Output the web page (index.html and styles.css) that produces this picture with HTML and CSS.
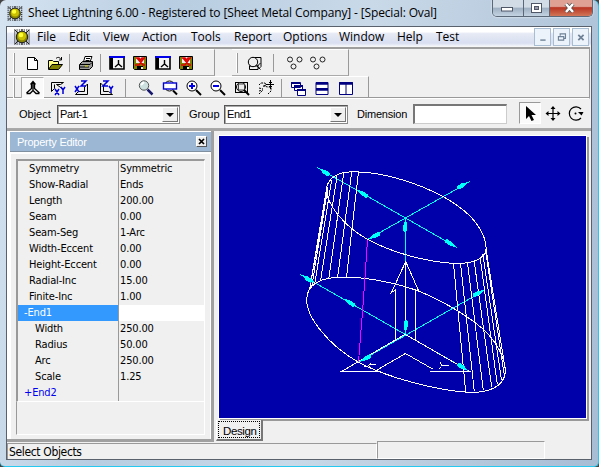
FILE: index.html
```
<!DOCTYPE html>
<html lang="en">
<head>
<meta charset="utf-8">
<title>Sheet Lightning 6.00</title>
<link rel="stylesheet" href="styles.css">
</head>
<body>
<svg class="defs" aria-hidden="true">
  <symbol id="logo" viewBox="0 0 16 16"><path d="M0 1h16M0 3h16M0 5h16M0 7h16M0 9h16M0 11h16M0 13h16M0 15h16" stroke="#222" stroke-dasharray="1.4 1"/><path d="M8 0v16M1 1l14 14M15 1L1 15" stroke="#222"/><circle cx="8" cy="8" r="5.7" fill="#8c8600" stroke="#222"/><circle cx="8" cy="7" r="4.2" fill="#c8c000"/><circle cx="7" cy="6" r="2.3" fill="#ffff38"/></symbol>
  <symbol id="disk" viewBox="0 0 16 16"><path d="M1.5 1.5h13v13h-12l-1-1z" fill="#808000" stroke="#000"/><path d="M4 2h8v6H4z" fill="#eee"/><path d="M5 11h6v3H5z" fill="#000"/><path d="M9 12h2v2H9z" fill="#eee"/><path d="M4 3h3l1.5 2L10 3h3M5 10h2l5-7M5 3l6 7h2M3 10h3" fill="none" stroke="#e00000" stroke-width="1.6"/></symbol>
  <symbol id="form" viewBox="0 0 16 16"><path d="M1 2h14v12H1z" fill="#f4f4f4" stroke="#000" stroke-width="1.6"/><path d="M0 1h16v2H0z" fill="#0000e8"/><path d="M1 3h3v11H1z" fill="#000"/><path d="M9.5 5v4L6 12M9.5 9l3.5 3" fill="none" stroke="#000" stroke-width="1.4"/></symbol>
  <symbol id="rings" viewBox="0 0 16 16"><g fill="none" stroke="#222"><circle cx="3" cy="4.5" r="2.5"/><circle cx="12.5" cy="4.5" r="2.5"/><circle cx="6.5" cy="11.5" r="2.5"/></g></symbol>
  <symbol id="boxlens" viewBox="0 0 16 16"><path d="M5 2.5h9v9l-3 3H2.500v-4M5 2.500l-2.500 3M11 14v-4M2.500 11h8l3-3" fill="none" stroke="#000"/><circle cx="6" cy="7" r="4.700" fill="#eee" stroke="#000"/><path d="M9.500 10.500l4 4" stroke="#000"/></symbol>
  <symbol id="arrow" overflow="visible"><path d="M0 0L-5-1.300L-8-2.300L-13-2.300L-14 0L-13 1.500L-8 2L-5 1.300Z" fill="#0ff"/></symbol>
</svg>
<div class="window">
  <header class="title">
    <svg class="logo"><use href="#logo"/></svg>
    <span class="caption">Sheet Lightning 6.00 - Registered to [Sheet Metal Company] - [Special: Oval]</span>
    <div class="controls">
      <span class="ctl"><svg viewBox="0 0 14 12"><rect x="1.500" y="5.500" width="11" height="3.500" fill="#fff" stroke="#505868"/></svg></span>
      <span class="ctl"><svg viewBox="0 0 14 12"><rect x="1.500" y="1.500" width="10" height="9" fill="#fff" stroke="#505868"/><rect x="4.500" y="4.500" width="4" height="3" fill="#99a" stroke="#505868"/></svg></span>
      <span class="ctl close"><svg viewBox="0 0 14 12"><path d="M3 2l7 8M10 2L3 10" stroke="#505050" stroke-width="4"/><path d="M3 2l7 8M10 2L3 10" stroke="#fff" stroke-width="2.500"/></svg></span>
    </div>
  </header>
  <div class="client">
    <nav class="menu">
      <svg class="logo"><use href="#logo"/></svg>
      <span class="m1">File</span><span class="m2">Edit</span><span class="m3">View</span><span class="m4">Action</span><span class="m5">Tools</span><span class="m6">Report</span><span class="m7">Options</span><span class="m8">Window</span><span class="m9">Help</span><span class="m10">Test</span>
      <div class="mdi">
        <svg viewBox="0 0 17 17"><path d="M6 12h6" stroke="#6f8297" stroke-width="1.600"/></svg>
        <svg viewBox="0 0 17 17"><path d="M7 7V5h6v5h-2M5 8h6v4H5z" fill="none" stroke="#6f8297" stroke-width="1.300"/></svg>
        <svg viewBox="0 0 17 17"><path d="M6 6l6 6M12 6l-6 6" stroke="#6f8297" stroke-width="2"/></svg>
      </div>
    </nav>
    <section class="dock">
      <div class="bars">
        <div class="bar file">
          <i class="grip"></i>
          <svg class="ico"><path d="M3.500 2.500h7l3 3v9h-10zM10.500 2.500v3h3" fill="#fff" stroke="#000"/></svg>
          <svg class="ico"><path d="M1.500 14V5.500h4l1 1h5V9" fill="#ffff80" stroke="#000"/><path d="M1.500 14.500L5 9.500h10.500l-4 5z" fill="#808000" stroke="#000"/><path d="M9 3.500c2-2 4-1 5 1M14.500 2v3H12" fill="none" stroke="#000"/></svg>
          <i class="sep"></i>
          <svg class="ico"><path d="M5.500 7L7 1.500h7L12 7" fill="#fff" stroke="#000"/><path d="M8 3.500h4M7.500 5.500h4" stroke="#000"/><path d="M1.500 9.500l3-3h10v5l-3 3h-10z" fill="#999" stroke="#000"/><path d="M2 9.500h10l2-2M2 12h9" fill="none" stroke="#000"/><path d="M7 11h3" stroke="#dd0"/></svg>
          <i class="sep"></i>
          <svg class="ico"><use href="#form"/></svg><svg class="ico"><use href="#disk"/></svg><svg class="ico"><use href="#form"/></svg><svg class="ico"><use href="#disk"/></svg>
        </div>
        <div class="bar objects">
          <i class="grip"></i>
          <svg class="ico"><use href="#boxlens"/></svg>
          <i class="sep"></i>
          <svg class="ico"><use href="#rings"/></svg><svg class="ico"><use href="#rings"/></svg>
        </div>
      </div>
      <div class="bars">
        <div class="bar view">
          <i class="grip"></i>
          <span class="pressed"><svg class="ico"><path d="M8 1v9M5.500 4.500L8 1.500l2.500 3M6.500 4v4.500L1.500 13M9.500 4v4.500l5 4.500M1.500 13.500H5l3-3 3 3h3.500" fill="none" stroke="#000" stroke-width="1.300"/></svg></span>
          <svg class="ico"><path d="M1.500 2.500h12l-3 2h-4l7 5M1.500 2.500v9l3-3V4.500" fill="none" stroke="#000"/><path d="M5 9l4 6M9 9l-4 6M11 7l2 3 2-3M13 10v4" fill="none" stroke="#0000d8" stroke-width="1.500"/></svg>
          <svg class="ico"><path d="M13.500 4v10.500h-12l3-3h6V7z" fill="none" stroke="#000"/><path d="M1 6l4 6M5 6l-4 6M7 1h5L7 6h5" fill="none" stroke="#0000d8" stroke-width="1.500"/></svg>
          <svg class="ico"><path d="M2.500 3v11.500h12l-4-3h-5V6z" fill="none" stroke="#000"/><path d="M5 1h5L5 6h5M11 6l2 3 2-3M13 9v4" fill="none" stroke="#0000d8" stroke-width="1.500"/></svg>
          <i class="sep wide"></i>
          <svg class="ico"><circle cx="6" cy="5.500" r="4.700" fill="#cce0e0" stroke="#555"/><path d="M3 5l3-3" stroke="#fff" stroke-width="2"/><path d="M9.500 9.500l5 5" stroke="#18186c" stroke-width="2.500"/></svg>
          <svg class="ico"><circle cx="7.500" cy="6" r="5" fill="#fff" stroke="#000"/><rect x="1.500" y="3" width="13" height="6" fill="#fff" stroke="#0000d8" stroke-width="1.400"/><path d="M11 10.500l4 4" stroke="#000" stroke-width="2"/></svg>
          <svg class="ico"><circle cx="6" cy="6" r="5" fill="#fff" stroke="#000"/><path d="M3 6h6M6 3v6" stroke="#0000e8" stroke-width="2"/><path d="M10 10l5 5" stroke="#000" stroke-width="2"/></svg>
          <svg class="ico"><circle cx="6" cy="6" r="5" fill="#fff" stroke="#000"/><path d="M3 6h6" stroke="#0000e8" stroke-width="2"/><path d="M10 10l5 5" stroke="#000" stroke-width="2"/></svg>
          <svg class="ico"><rect x="1.500" y="2.500" width="12" height="10" fill="none" stroke="#000"/><circle cx="7" cy="7" r="4.500" fill="#eee" stroke="#000"/><rect x="4.500" y="4" width="6" height="6" fill="none" stroke="#444"/><path d="M10 10l5 5" stroke="#000" stroke-width="2"/></svg>
          <svg class="ico"><path d="M1 5l2-2h4l1 2-3 1 5 1h3v4l-3 3M1 8l4 1M1 11l4-1M1 14l3-3" fill="none" stroke="#000" stroke-dasharray="2 1"/><path d="M12.500 0v9M8 4.500h8M11 2.500h3M11 6.500h3" stroke="#000"/></svg>
          <i class="sep"></i>
          <svg class="ico"><path d="M1.500 2.500h9v5h-9zM4.500 5.500h8v5h-8zM7.500 9.500h8v6h-8z" fill="#fff" stroke="#000080"/><path d="M1 3h9M4 6h9M7 10h9" stroke="#000080" stroke-width="2"/></svg>
          <svg class="ico"><path d="M2 2.500h12v12H2zM2 8.500h12" fill="#fff" stroke="#000080"/><path d="M2 3.500h12M2 9.500h12" stroke="#000080" stroke-width="2.500"/></svg>
          <svg class="ico"><path d="M1.500 2.500h13v12h-13zM8 2v12" fill="#fff" stroke="#000080"/><path d="M1 3.500h14" stroke="#000080" stroke-width="2.500"/></svg>
        </div>
      </div>
    </section>
    <section class="selector">
      <label class="l1">Object</label><div class="combo c1"><span>Part-1</span><b></b></div>
      <label class="l2">Group</label><div class="combo c2"><span>End1</span><b></b></div>
      <label class="l3">Dimension</label><div class="field"></div>
      <span class="tool on"><svg viewBox="0 0 22 22"><path d="M7 4v13l3-3 2.500 5 2.500-1-2.500-5H17z" fill="#000"/></svg></span>
      <span class="tool"><svg viewBox="0 0 22 22"><path d="M11 5v13M4.500 11.500h13" stroke="#000" stroke-width="1.200"/><path d="M11 4l2.500 3h-5zM11 19l2.500-3h-5zM3.500 11.500l3-2.500v5zM18.500 11.500l-3-2.500v5z"/></svg></span>
      <span class="tool last"><svg viewBox="0 0 22 22"><path d="M16 16A6.700 6.700 0 1 1 16 7" fill="none" stroke="#000" stroke-width="1.200"/><path d="M13 10h5.500L16.500 13.500z"/><circle cx="10.500" cy="11.500" r="1"/></svg></span>
    </section>
    <main class="work">
      <aside class="editor">
        <h2>Property Editor<b><svg viewBox="0 0 9 9"><path d="M2 2l5 5M7 2l-5 5" stroke="#000" stroke-width="1.700"/></svg></b></h2>
        <div class="panel">
          <dl class="props">
            <dt>Symmetry</dt><dd>Symmetric</dd>
            <dt>Show-Radial</dt><dd>Ends</dd>
            <dt>Length</dt><dd>200.00</dd>
            <dt>Seam</dt><dd>0.00</dd>
            <dt>Seam-Seg</dt><dd>1-Arc</dd>
            <dt>Width-Eccent</dt><dd>0.00</dd>
            <dt>Height-Eccent</dt><dd>0.00</dd>
            <dt>Radial-Inc</dt><dd>15.00</dd>
            <dt>Finite-Inc</dt><dd>1.00</dd>
            <dt class="sel">-End1</dt><dd class="edit"></dd>
            <dt class="sub">Width</dt><dd>250.00</dd>
            <dt class="sub">Radius</dt><dd>50.00</dd>
            <dt class="sub">Arc</dt><dd>250.00</dd>
            <dt class="sub">Scale</dt><dd>1.25</dd>
            <dt class="group">+End2</dt><dd></dd>
          </dl>
          <div class="blank"></div>
        </div>
      </aside>
      <div class="design">
        <svg class="canvas" viewBox="219 136 367 282">
          <g fill="none" stroke="#0ff">
            <path d="M317 167.500L457 247.500M367.500 239.500L470 181.500M300.500 274.500L470 371.500M358.500 362L485 290M405.500 218v116"/>
          </g>
          <g fill="none" stroke="#fff">
            <path d="M326.500 190C326.500 184 331 172 352 171.800C385 171 432 187 458 206C478 220 487 238 486 250C484 260 470 263.500 458 263.500C430 263 392 253 367 239C345 227 327 205 326.500 190Z"/>
            <path d="M306.700 299C307 285 320 277.500 340 277.300C365 276 400 284 420 291.700C436 298 463 312 483 329C497 342 505 358 505.500 372C504 386 490 392.500 471 392.500C440 391 390 379 358 362C330 346 306 318 306.700 299Z"/>
            <path d="M358.500 172L346.500 277M351.700 172L337.500 278M343.700 173L328.800 279M337 176.500L320.500 281M331.700 180L314.500 285M328 187L311.500 288M326.700 193L309.500 290M327 186L310.500 284"/>
            <path d="M453.500 263.500L465.700 392M460.500 263L474.300 391.500M467.500 262.500L483.300 390.500M474 260L491.700 387.300M480 256.500L497.300 384.500M482.700 253.500L501.500 380M485.300 249L504.300 375M486 249L505.500 371"/>
            <path d="M405.500 261v73L341.500 371.500H381M405.500 334.500L469.700 371.500H429.500M377 370L405.500 353.500L433.500 369.500M405.500 262L391.500 292.500L395.500 290V341M405.500 261L418.700 291L415.500 290V340"/>
            <path d="M364 366h4l3-3M368 365l3 3M370 364.500h6M440 362l2 4M441 367l-1.500 2M442 365.500h7"/>
          </g>
          <path d="M367.500 240L363.500 299L358.500 362" fill="none" stroke="#f0f"/>
          <use href="#arrow" transform="translate(318 168) rotate(210)"/>
          <use href="#arrow" transform="translate(356 189.500) rotate(210)"/>
          <use href="#arrow" transform="translate(457 247.500) rotate(30)"/>
          <use href="#arrow" transform="translate(469.500 181.500) rotate(-30)"/>
          <use href="#arrow" transform="translate(368 239.500) rotate(150)"/>
          <use href="#arrow" transform="translate(405.500 218) rotate(-90)"/>
          <use href="#arrow" transform="translate(300.500 274.500) rotate(210)"/>
          <use href="#arrow" transform="translate(343 298.500) rotate(210)"/>
          <use href="#arrow" transform="translate(485 289.500) rotate(-30)"/>
          <use href="#arrow" transform="translate(359 362) rotate(150)"/>
          <use href="#arrow" transform="translate(469 371) rotate(30)"/>
          <use href="#arrow" transform="translate(405.500 334) rotate(90)"/>
        </svg>
        <div class="tabs"><span class="tab"><em>Design</em></span></div>
      </div>
    </main>
    <footer class="status"><span class="msg">Select Objects</span><span class="cell"></span></footer>
  </div>
</div>
</body>
</html>
```
FILE: styles.css
```
* { box-sizing: border-box; }
body { margin: 0; width: 599px; height: 467px; overflow: hidden; background: #444; font-family: "Liberation Sans", sans-serif; }
.defs { position: absolute; width: 0; height: 0; }
svg { display: block; flex: none; }

.window { width: 599px; height: 467px; padding: 0 6px 6px; display: flex; flex-direction: column; border-radius: 6px 6px 5px 5px; border-right: 1px solid #26c8f0; border-bottom: 1px solid #26c8f0; background: linear-gradient(100deg, #d6e4f1 0, #b8cde1 25%, #c9d9e8 55%, #a7bdd4 100%); }
.title { height: 26px; flex: none; display: flex; align-items: flex-start; margin-right: -1px; }
.logo { width: 16px; height: 15px; margin: 6px 5px 0 1px; }
.caption { font: 12px/15px "Open Sans", sans-serif; white-space: nowrap; color: #000; margin-top: 5px; letter-spacing: -0.14px; }
.controls { display: flex; margin-left: auto; height: 17px; border: 1px solid #5b6877; border-top: 0; border-radius: 0 0 5px 5px; overflow: hidden; box-shadow: 0 0 2px #fff; }
.ctl { width: 26px; padding: 2px 0 0 6px; border-right: 1px solid #5b6877; background: linear-gradient(#d2dce7 0 45%, #9eafc2 50%, #c4d3e2); }
.ctl:first-child { width: 31px; padding-left: 7px; }
.ctl svg { width: 14px; height: 12px; }
.ctl.close { width: 42px; padding-left: 13px; border: 0; background: linear-gradient(#dea193 0 40%, #b93523 48%, #d17658); }

.client { flex: 1; display: flex; flex-direction: column; border: 1px solid #59616d; background: #f0f0f0; min-height: 0; }
.menu { height: 20px; flex: none; display: flex; align-items: center; background: linear-gradient(#fff 0 25%, #e6eaf5 35%, #d9dff1 85%, #f2f4fa); border-bottom: 1px solid #f6f6f6; font: 12px/18px "Open Sans", sans-serif; white-space: nowrap; }
.menu .logo { margin: 1px 7px 0; height: 16px; }
.menu > span { flex: none; }
.m1 { width: 32px; } .m2 { width: 34px; } .m3 { width: 39px; } .m4 { width: 49px; } .m5 { width: 43px; } .m6 { width: 49px; } .m7 { width: 56px; } .m8 { width: 58px; } .m9 { width: 39px; } .m10 { width: 30px; }
.mdi { display: flex; gap: 2px; margin-left: auto; padding-right: 2px; }
.mdi svg { width: 17px; height: 18px; border: 1px solid #a9bdd2; background: #edf3fa; }

.dock { flex: none; height: 52px; margin: 0 1px 0 0; border-top: 2px solid #9e9e9e; border-bottom: 1px solid #fff; border-right: 1px solid #999; display: grid; grid-template-rows: 27px 22px; background: #f0f0f0; }
.bars { display: flex; gap: 17px; padding-left: 2px; border-bottom: 1px solid #999; }
.bars:first-child { border: 0; }
.bar { display: flex; align-items: center; border-top: 1px solid #fff; border-right: 1px solid #999; border-bottom: 1px solid #aaa; }
.bar.file { width: 206px; }
.bar.objects { width: 117px; }
.bar.view { width: 360px; border-bottom: 0; padding-top: 1px; }
.grip { width: 2px; height: 20px; margin: 0 4px; border-right: 1px solid #999; border-left: 1px solid #fff; flex: none; }
.ico { width: 16px; height: 16px; margin: 0 3.5px; }
.view .ico { margin: 0 4px; }
.file .grip { margin-right: 5px; }
.objects .grip { margin-right: 5px; }
.sep { width: 1px; height: 18px; margin: 0 4px 0 3px; background: #999; flex: none; }
.sep.wide { margin: 0 8px 0 7px; }
.objects .sep { margin: 0 9px 0 7px; }
.pressed { width: 23px; height: 21px; margin: 0 2px 0 2px; padding: 2px 0 0; flex: none; background: #fafafa; border: 1px solid #aaa; border-right-color: #fff; border-bottom: 0; }
.view .pressed .ico { margin: 0 3px; }

.selector { flex: none; height: 30px; display: flex; align-items: flex-start; border-bottom: 1px solid #aaa; font-size: 11px; line-height: 16px; padding-top: 7px; }
.selector label { flex: none; letter-spacing: 0; }
.l1 { width: 38px; margin-left: 12px; } .l2 { width: 35px; margin-left: 9px; } .l3 { width: 56px; margin-left: 9px; }
.selector .l3 { letter-spacing: -.2px; }
.combo { height: 19px; display: flex; background: #fff; border: 1px solid #888; border-top-color: #555; border-left-color: #555; box-shadow: inset 1px 1px #aaa; margin-top: -1px; padding: 1px; flex: none; letter-spacing: -.4px; }
.combo span { flex: 1; padding-left: 1px; line-height: 15px; }
.combo b { width: 16px; height: 15px; background: #f0f0f0; border: 1px solid #fff; border-right-color: #777; border-bottom-color: #777; padding: 5px 3px; }
.combo b::after { content: ""; display: block; border: 4px solid transparent; border-top-color: #000; }
.c1 { width: 123px; } .c2 { width: 124px; }
.field { width: 94px; height: 20px; margin-top: -2px; background: #fff; border: 1px solid #ccc; border-top: 2px solid #777; border-left: 2px solid #777; flex: none; }
.tool { width: 22px; height: 22px; margin: -4px 1px 0 0; flex: none; }
.tool.on { margin-left: 12px; background: #fafafa; border: 1px solid #999; border-right-color: #fff; border-bottom-color: #fff; }
.tool svg { width: 22px; height: 22px; }
.tool.on svg { margin: -1px; }
.tool.last { margin-left: 0; }

.work { flex: 1; display: flex; min-height: 0; border-top: 2px solid #a7a7a7; }
.editor { width: 207px; padding: 1px 0 0 3px; display: flex; flex-direction: column; border-right: 3px solid #a0a0a0; border-bottom: 3px solid #a0a0a0; background: #fff; height: 311px; }
.editor h2 { margin: 0; height: 20px; flex: none; background: #9bb7d4; color: #fff; font: 11px/20px "Liberation Sans", sans-serif; padding: 0 4px 0 7px; display: flex; justify-content: space-between; align-items: center; border-bottom: 1px solid #8090a0; letter-spacing: -.25px; }
.editor h2 b { width: 11px; height: 11px; background: #eee; border: 1px solid #fff; border-right-color: #555; border-bottom-color: #555; }
.panel { flex: 1; margin: 2px 1px 0; padding: 5px 5px 4px; background: #f0f0f0; display: flex; flex-direction: column; }
.props { margin: 0; border: 2px solid #999; border-right: 1px solid #fff; border-bottom: 1px solid #fff; display: grid; grid-template-columns: 101px 1fr; grid-auto-rows: 16px; font: 11px/16px "DejaVu Sans Condensed", sans-serif; letter-spacing: -.15px; }
.blank { flex: 1; border: 1px solid #fff; border-left-color: #999; border-top: 0; }
.props dt { padding-left: 11px; border-right: 1px solid #999; white-space: nowrap; }
.props dd { margin: 0; padding-left: 1px; }
.props .sub { padding-left: 17px; }
.props .sel { padding-left: 6px; color: #fff; background: #3399ff; }
.props .edit { background: #fff; }
.props .group { padding-left: 6px; color: #0000f0; }
.design { flex: 1; padding: 5px 4px 0 5px; }
.canvas { width: 367px; height: 282px; background: #0000aa; outline: 1px solid #fff; box-shadow: 2px 2px 0 1px #999; shape-rendering: crispEdges; }
.tabs { display: flex; margin-left: -3px; padding-top: 2px; }
.tab { width: 47px; height: 21px; border: 1px solid #fff; border-right: 2px solid #777; border-bottom: 2px solid #777; border-top: 0; background: #f0f0f0; padding: 1px 1px; }
.tab em { display: block; height: 17px; border: 1px dotted #000; font: 11.500px/18px "Liberation Sans", sans-serif; padding-left: 4px; letter-spacing: -.4px; }
.status { flex: none; height: 16px; display: flex; justify-content: space-between; font: 12px/16px "DejaVu Sans Condensed", sans-serif; }
.msg { width: 370px; padding-left: 1px; border-top: 1px solid #999; border-left: 1px solid #999; border-right: 1px solid #fff; letter-spacing: -.35px; }
.cell { width: 168px; margin-right: 46px; border: 1px solid #999; border-right-color: #fff; border-bottom-color: #fff; height: 18px; margin-top: -2px; }
```
